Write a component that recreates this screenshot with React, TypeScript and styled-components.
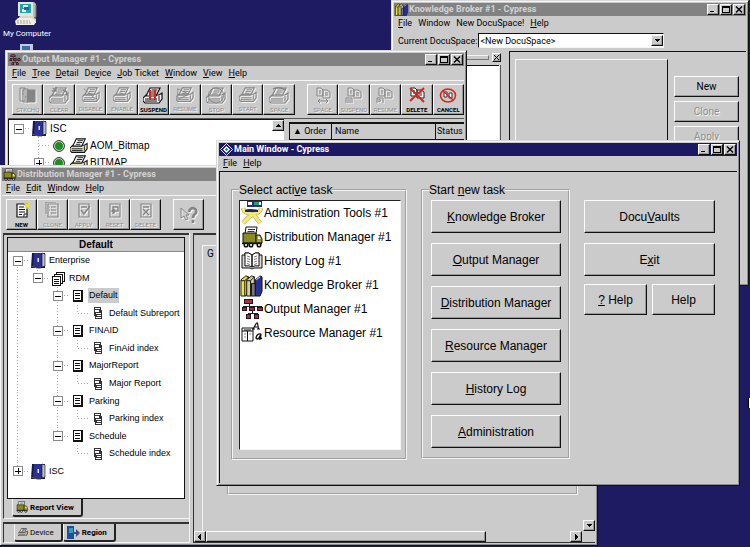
import React from "react";
import styled, { createGlobalStyle, css } from "styled-components";

const GlobalStyle = createGlobalStyle`
  * { box-sizing: border-box; }
  body {
    margin: 0;
    background: #1e1b63;
    font-family: Roboto, "Liberation Sans", Arial, sans-serif;
    font-size: 10px;
    color: #000;
  }
  button, select, input { font: inherit; color: inherit; margin: 0; padding: 0; border-radius: 0; }
  ul { list-style: none; margin: 0; padding: 0; }
  svg { display: block; flex: none; }
`;

const GREY = "#cbcbcb";

const raised = css`
  border: 1px solid;
  border-color: #fbfbfb #111 #111 #fbfbfb;
  box-shadow: inset -1px -1px 0 #999;
`;

/* ---------- desktop ---------- */

const Desktop = styled.main`
  position: relative;
  min-height: 100vh;
  overflow: hidden;
  background: #1e1b63;
`;

const Shortcuts = styled.div`
  display: flex;
  flex-direction: column;
  align-items: center;
  gap: 4px;
  width: 54px;
  padding-top: 1px;
`;

const Shortcut = styled.button`
  display: flex;
  flex-direction: column;
  align-items: center;
  gap: 2px;
  border: 0;
  background: none;
  color: #fff;
  font-size: 8px;
  line-height: 12px;
  white-space: nowrap;
`;

const EdgeMark = styled.div`
  position: absolute;
  right: 0;
  top: 398px;
  width: 2px;
  height: 10px;
  background: #fff;
  border-left: 1px solid #000;
`;

/* ---------- window chrome ---------- */

type Place = { $x: number; $y: number; $w: number; $h: number };

const Frame = styled.section<Place>`
  position: absolute;
  left: ${(p) => p.$x}px;
  top: ${(p) => p.$y}px;
  width: ${(p) => p.$w}px;
  height: ${(p) => p.$h}px;
  display: flex;
  flex-direction: column;
  padding: 2px;
  background: ${GREY};
  border: 1px solid;
  border-color: #d8d8d8 #111 #111 #d8d8d8;
  box-shadow: inset 1px 1px 0 #f6f6f6, inset -1px -1px 0 #8c8c8c;
  overflow: hidden;
`;

const TitleBar = styled.header<{ $active?: boolean }>`
  display: flex;
  align-items: center;
  flex: none;
  gap: 1px;
  height: 13px;
  padding: 0 1px;
  background: ${(p) => (p.$active ? "#1c1864" : "#828282")};
  color: ${(p) => (p.$active ? "#fff" : "#d2d2d2")};
`;

const Title = styled.h2`
  flex: 1;
  margin: 0;
  font-size: 9px;
  font-weight: 700;
  line-height: 13px;
  white-space: nowrap;
`;

const CaptionGroup = styled.div`
  display: flex;
  gap: 1px;
`;

const CaptionButton = styled.button`
  display: grid;
  place-items: center;
  width: 12px;
  height: 11px;
  background: ${GREY};
  ${raised}
`;

const MenuBar = styled.nav`
  display: flex;
  flex: none;
  align-items: center;
  gap: 6px;
  height: 14px;
  padding-left: 4px;
`;

const MenuItem = styled.button`
  border: 0;
  background: none;
  font-size: 9px;
  line-height: 14px;
  white-space: nowrap;
`;

const Key = styled.u`
  text-underline-offset: 1px;
  text-decoration-thickness: 1px;
`;

function Mnemonic({ text }: { text: string }) {
  const i = text.indexOf("&");
  if (i < 0) return <>{text}</>;
  return (
    <span>
      {text.slice(0, i)}
      <Key>{text[i + 1]}</Key>
      {text.slice(i + 2)}
    </span>
  );
}

type WindowProps = Place & {
  title: string;
  icon: React.ReactNode;
  menu: string[];
  active?: boolean;
  children: React.ReactNode;
};

function Window({ title, icon, menu, active, children, ...place }: WindowProps) {
  return (
    <Frame {...place} aria-label={title}>
      <TitleBar $active={active}>
        {icon}
        <Title>{title}</Title>
        <CaptionGroup>
          <CaptionButton aria-label="Minimize">
            <svg width="8" height="7" shapeRendering="crispEdges"><path d="M1 5h4v1H1z" /></svg>
          </CaptionButton>
          <CaptionButton aria-label="Maximize">
            <svg width="8" height="7" shapeRendering="crispEdges"><path d="M0 0h8v7H0zM1 2v4h6V2z" fillRule="evenodd" /></svg>
          </CaptionButton>
          <CaptionButton aria-label="Close">
            <svg width="8" height="7"><path d="M1 0.5l6 6M7 0.5l-6 6" stroke="#000" strokeWidth="1.4" /></svg>
          </CaptionButton>
        </CaptionGroup>
      </TitleBar>
      <MenuBar>
        {menu.map((m) => (
          <MenuItem key={m}><Mnemonic text={m} /></MenuItem>
        ))}
      </MenuBar>
      {children}
    </Frame>
  );
}

/* ---------- icons ---------- */

const ComputerIcon = () => (
  <svg width="24" height="25" viewBox="0 0 24 25">
    <path d="M4 1h15l2 2v13H5z" fill="#b9b9ad" />
    <path d="M3 1h15v14H3z" fill="#e4e4da" />
    <path d="M5 3h11v9H5z" fill="#1ea5a5" />
    <path d="M8 4h5v3H8zM7 8h4v3H7z" fill="#e9f6f2" />
    <path d="M9 6h5v3H9z" fill="#2f5fa8" />
    <path d="M5 15h13l3 3v4H3v-4z" fill="#d6d6c9" />
    <path d="M0 20l3-3h14l4 4-2 3H1z" fill="#efefe4" />
    <path d="M2 20h13M2 22h14" stroke="#a3a398" strokeDasharray="2 1" />
    <path d="M21 4v12l-2 1" stroke="#6d6d66" fill="none" />
  </svg>
);

const NetworkIcon = () => (
  <svg width="16" height="8" viewBox="0 0 16 8" shapeRendering="crispEdges">
    <path d="M1 0h13v8H1z" fill="#c3cbe0" />
    <path d="M3 2h8v6H3z" fill="#3d6ea8" />
  </svg>
);

const TruckIcon = ({ size = 22 }: { size?: number }) => (
  <svg width={size} height={size} viewBox="0 0 22 22">
    <path d="M5 1h11l-1 7H4z" fill="#fff" stroke="#111" />
    <path d="M7 3.500h7M6.500 5.500h7" stroke="#333" />
    <path d="M2 7h13v10H2z" fill="#8b8a1c" stroke="#111" />
    <path d="M15 9h4l2 4v4h-6z" fill="#a5a428" stroke="#111" />
    <path d="M17 10.500h1.500l1 2.500H17z" fill="#fff" />
    <path d="M1 17.500h20" stroke="#111" strokeWidth="1.500" />
    <g fill="#fff" stroke="#111" strokeWidth="1.500">
      <circle cx="5" cy="19" r="1.800" /><circle cx="10" cy="19" r="1.800" /><circle cx="18" cy="19" r="1.800" />
    </g>
  </svg>
);

const ToolsIcon = () => (
  <svg width="22" height="24" viewBox="0 0 22 24">
    <path d="M6 0h15v6H6z" fill="#262b86" />
    <path d="M7 1h4v3H7z" fill="#fff" /><path d="M13 1h5v3h-5z" fill="#2d9b6d" /><path d="M18 1h2v3h-2z" fill="#fff" />
    <path d="M2 7q1 5 6 5l5 2 6 8M20 7q-1 5-6 5l-6 4-6 6" fill="none" stroke="#b5ab48" strokeWidth="4.400" />
    <path d="M2 7q1 5 6 5l5 2 6 8M20 7q-1 5-6 5l-6 4-6 6" fill="none" stroke="#f4e878" strokeWidth="3.200" />
    <path d="M4 9q4-2 13 0v2H4z" fill="#1b2170" />
  </svg>
);

const BookIcon = () => (
  <svg width="22" height="18" viewBox="0 0 22 18">
    <path d="M1 3h3v-2q4-1 7 2 3-3 7-2v2h3v13h-8l-2 1-2-1H1z" fill="#d9d9d9" stroke="#111" />
    <path d="M4 1q4-1 7 2v12q-3-2-7-1zM18 1q-4-1-7 2v12q3-2 7-1z" fill="#fff" stroke="#111" />
    <path d="M6 4l3 1M6 6.500l3 1M6 9l3 1M6 11.500l3 1M16 4l-3 1M16 6.500l-3 1M16 9l-3 1M16 11.500l-3 1" stroke="#777" />
  </svg>
);

const BooksIcon = ({ size = 23 }: { size?: number }) => (
  <svg width={size} height={size} viewBox="0 0 24 24">
    <path d="M1 6l5-4 3 1v15l-3 5H1z" fill="#efe23a" stroke="#111" />
    <path d="M5 7v16M1 7h4l4-4" stroke="#111" fill="none" />
    <path d="M7 6l5-4 3 1v15l-3 5H7z" fill="#d3cf9a" stroke="#111" />
    <path d="M11 7v16M7 7h4l4-4" stroke="#111" fill="none" />
    <path d="M12 10h4v13h-4z" fill="#777" stroke="#111" />
    <path d="M16 6l5-4 2 1v15l-2 5h-5z" fill="#2a2f97" stroke="#111" />
    <path d="M17 6l4-3" stroke="#fff" />
  </svg>
);

const ChartIcon = ({ size = 22 }: { size?: number }) => (
  <svg width={size} height={size} viewBox="0 0 22 22" shapeRendering="crispEdges">
    <path d="M8 5v3M2 9V8h18v2M11 8v7M7 18v-3h9v3" stroke="#222" fill="none" />
    <g fill="#a52f4a" stroke="#2b1117">
      <path d="M3 1h8v4H3zM1 9h4v3H1zM8 9h5v3H8zM16 9h5v3h-5zM5 16h4v4H5zM13 16h4v4h-4z" />
    </g>
  </svg>
);

const ResourceIcon = () => (
  <svg width="22" height="22" viewBox="0 0 22 22">
    <path d="M1 6h11v13H1zM1 9h11M6.500 9v10M3 8h7" fill="#fff" stroke="#111" />
    <path d="M3 12h2M3 15h2M8 12h2" stroke="#888" />
    <path d="M12 7l3.500-6h1l1 6M13.500 5h3.500M11 7h3M16 7h3" fill="none" stroke="#111" strokeWidth="1.200" />
    <path d="M20 12q-4-1-5 4 1 2 3 0l2-4-1 5 2-1" fill="none" stroke="#111" strokeWidth="1.400" />
  </svg>
);

const CypressIcon = () => (
  <svg width="13" height="13" viewBox="0 0 13 13">
    <path d="M6.500 0.500l6 6-6 6-6-6z" fill="#1c1864" stroke="#dfe9ff" />
    <path d="M6.500 3l3.500 3.500-3.500 3.500L3 6.500z" fill="#fff" />
    <path d="M6.500 5v3M5 6.500h3" stroke="#2d7f86" />
  </svg>
);

const VaultIcon = () => (
  <svg width="16" height="17" viewBox="0 0 16 17">
    <path d="M2 1h13v15H1z" fill="#15184a" />
    <path d="M4 1h8v14H3z" fill="#2b3191" />
    <path d="M12 1l3 1v12l-3 1z" fill="#b8bbd8" stroke="#111" strokeWidth="0.600" />
    <path d="M7.500 6h1.500v4H7.500z" fill="#dfe3ff" />
    <path d="M1 14l6 2h4" stroke="#555" fill="none" />
  </svg>
);

const StackIcon = () => (
  <svg width="15" height="15" viewBox="0 0 15 15" shapeRendering="crispEdges">
    <g fill="#fff" stroke="#111"><path d="M5.500 1.500h8v9h-8z" /><path d="M3.500 3.500h8v9h-8z" /><path d="M1.500 5.500h8v9h-8z" /></g>
    <path d="M3 8h5M3 10h5M3 12h5" stroke="#111" />
  </svg>
);

const ReportIcon = () => (
  <svg width="10" height="12" viewBox="0 0 10 12" shapeRendering="crispEdges">
    <path d="M0 0h10v12H0z" fill="#111" /><path d="M1 1h7v9H1z" fill="#fff" />
    <path d="M2 3h5v1H2zM2 5h5v1H2zM2 8h5v1H2z" fill="#111" />
  </svg>
);

const SubreportIcon = () => (
  <svg width="8" height="12" viewBox="0 0 8 12" shapeRendering="crispEdges">
    <path d="M0 0h7v3h1v9H1V9H0z" fill="#333" /><path d="M1 1h5v1H1zM1 3h4v2H1zM2 6h5v1H2zM3 8h4v1H3zM2 10h5v1H2z" fill="#fff" />
  </svg>
);

const StatusDot = () => (
  <svg width="12" height="12" viewBox="0 0 12 12">
    <circle cx="6" cy="6" r="5.400" fill="#d7ead7" stroke="#222" /><circle cx="6" cy="6" r="4" fill="#1d8f22" />
  </svg>
);

const PrinterIcon = ({ width = 20, ink = "#111", paper = "#fff", body = "#e4e4c2", children }: {
  width?: number; ink?: string; paper?: string; body?: string; children?: React.ReactNode;
}) => (
  <svg width={width} height={(width * 17) / 20} viewBox="0 0 20 17">
    <path d="M3 8h13l3-2v6l-3 4H2l-2-2v-3z" fill={body} stroke={ink} strokeWidth="1.200" />
    <path d="M7 1h10l-4 8H3z" fill={paper} stroke={ink} strokeWidth="1.200" />
    <path d="M8.500 3h6M7.500 5h6M6.500 7h5" stroke={ink} />
    <path d="M2 12h12M2 14h12M16 9v5" stroke={ink} />
    {children}
  </svg>
);

const OFF = "#858585";
const off = { ink: OFF, paper: "none", body: "none" };

const StackCheck = () => (
  <svg width="18" height="17" viewBox="0 0 18 17" fill="none" stroke={OFF}>
    <path d="M1 1h5v13H1zM4 2h5v13H4z" /><path d="M8 3h8v12H8z" fill={OFF} /><path d="M3 4h2M3 7h2M6 10h2" />
  </svg>
);
const Pages = ({ ink = OFF, fill = "none", children }: { ink?: string; fill?: string; children?: React.ReactNode }) => (
  <svg width="18" height="17" viewBox="0 0 18 17" fill="none" stroke={ink}>
    <path d="M3 1h4l2 2v6H3zM9 3h4l3 2v6H9z" fill={fill} />
    <path d="M5 4h2M5 6h2M11 6h3M11 8h3" />
    {children}
  </svg>
);
const Sheet = ({ ink = OFF, fill = "none", children }: { ink?: string; fill?: string; children?: React.ReactNode }) => (
  <svg width="18" height="17" viewBox="0 0 18 17" fill="none" stroke={ink}>
    <path d="M4 2h10v13H4z" fill={fill} strokeWidth="1.200" />
    {children}
  </svg>
);

/* ---------- toolbars ---------- */

const Toolbar = styled.div`
  display: flex;
  flex: none;
  gap: 12px;
  padding: 3px 0 3px 4px;
  border-top: 1px solid #f4f4f4;
`;

const ToolGroup = styled.div<{ $count: number; $fixed?: boolean }>`
  display: grid;
  flex: ${(p) => (p.$fixed ? "none" : p.$count)};
  grid-template-columns: repeat(${(p) => p.$count}, ${(p) => (p.$fixed ? "auto" : "minmax(0, 1fr)")});
`;

const ToolButton = styled.button`
  display: flex;
  flex-direction: column;
  align-items: center;
  justify-content: center;
  gap: 3px;
  min-width: 31px;
  height: 31px;
  background: ${GREY};
  font-size: 6px;
  font-weight: 700;
  line-height: 6px;
  ${raised}
  &:disabled {
    color: #8d8d8d;
    font-weight: 400;
    text-shadow: 1px 1px 0 #f4f4f4;
  }
  &:disabled svg { filter: drop-shadow(1px 1px 0 #f4f4f4); }
`;

type Tool = { label: string; icon: React.ReactNode; on?: boolean };

const outputTools: Tool[] = [
  { label: "STKCHQ", icon: <StackCheck /> },
  { label: "CLEAR", icon: <PrinterIcon {...off}><path d="M4 1l3 3M7 0v4H3M14 3q5 1 4 6" stroke={OFF} fill="none" strokeWidth="1.500" /></PrinterIcon> },
  { label: "DISABLE", icon: <PrinterIcon {...off} width={18}><path d="M2 2l14 12" stroke={OFF} /></PrinterIcon> },
  { label: "ENABLE", icon: <PrinterIcon {...off} width={18} /> },
  { label: "SUSPEND", on: true, icon: <PrinterIcon body="#f3f3f3"><path d="M7 3v10M12 3v10" stroke="#d9261c" strokeWidth="2" /></PrinterIcon> },
  { label: "RESUME", icon: <PrinterIcon {...off} width={18}><path d="M2 2l12 6-12 6z" stroke={OFF} fill="none" /></PrinterIcon> },
  { label: "STOP", icon: <PrinterIcon {...off}><circle cx="10" cy="8.500" r="7.500" stroke={OFF} fill="none" /></PrinterIcon> },
  { label: "START", icon: <PrinterIcon {...off} width={18} /> },
  { label: "SPACE", icon: <PrinterIcon {...off}><path d="M4 2q6-3 13 1" stroke={OFF} fill="none" strokeWidth="1.500" /></PrinterIcon> },
];

const jobTools: Tool[] = [
  { label: "SPACE", icon: <Pages><path d="M4 14h10M6 12l-2 2 2 2M12 12l2 2-2 2" /></Pages> },
  { label: "SUSPEND", icon: <Pages><path d="M1 16v-5h6v5M3 12v4M5 12v4" /></Pages> },
  { label: "RESUME", icon: <Pages><path d="M1 16v-5h6v5M3 12v3l2-1.500z" /></Pages> },
  { label: "DELETE", on: true, icon: <Pages ink="#222" fill="#fff"><path d="M2 1l14 14M16 1L2 14" stroke="#d9261c" strokeWidth="2" /></Pages> },
  { label: "CANCEL", on: true, icon: (
    <svg width="18" height="17" viewBox="0 0 18 17" fill="none">
      <path d="M5 5h3v5H5zM10 6h3v5h-3z" stroke="#333" fill="#fff" />
      <ellipse cx="9" cy="8.500" rx="7.500" ry="6.500" stroke="#d9261c" strokeWidth="1.600" /><path d="M4 4l10 9" stroke="#d9261c" strokeWidth="1.200" />
    </svg>
  ) },
];

const reportTools: Tool[] = [
  { label: "NEW", on: true, icon: (
    <Sheet ink="#111" fill="#fff">
      <path d="M6 5h5M6 7.500h6M6 10h6M6 12.500h3" />
      <path d="M11 15v-3h3" fill="#fff" />
      <path d="M14 0v7M10.500 3.500h7M11.500 1l5 5M16.500 1l-5 5" stroke="#efe12c" strokeWidth="1.200" />
    </Sheet>
  ) },
  { label: "CLONE", icon: <Sheet><path d="M2 12V0h10M7 5h5M7 8h5M7 11h5M5 5h1M5 8h1" /></Sheet> },
  { label: "APPLY", icon: <Sheet><path d="M6 5h6M6 8l3 4 6-8" strokeWidth="1.500" /></Sheet> },
  { label: "RESET", icon: <Sheet><path d="M7 12V5h5v4H7M9 11l-3-2 3-2" strokeWidth="1.400" /></Sheet> },
  { label: "DELETE", icon: <Sheet><path d="M6 5h6M6 7l6 6M12 7l-6 6" strokeWidth="1.400" /></Sheet> },
];

function Tools({ items, fixed }: { items: Tool[]; fixed?: boolean }) {
  return (
    <ToolGroup $count={items.length} $fixed={fixed}>
      {items.map((t) => (
        <ToolButton key={t.label} disabled={!t.on}>
          {t.icon}
          {t.label}
        </ToolButton>
      ))}
    </ToolGroup>
  );
}

/* ---------- tree ---------- */

const dash = "repeating-linear-gradient(#aaa 0 1px, transparent 1px 3px)";
const dashAcross = "repeating-linear-gradient(90deg, #aaa 0 1px, transparent 1px 3px)";

const TreeList = styled.ul`
  display: grid;
  grid-auto-rows: 17px;
  align-content: start;
  font-family: "Liberation Sans", Arial, sans-serif;
`;

const EvenTree = styled(TreeList)`
  grid-auto-rows: 1fr;
  height: 228px;
  font-size: 9px;
`;

const TreeRow = styled.li`
  display: flex;
  align-items: center;
  min-width: 0;
`;

const Guide = styled.span<{ $up?: boolean; $down?: boolean; $across?: boolean }>`
  display: grid;
  place-items: center;
  flex: none;
  align-self: stretch;
  width: 20px;
  background:
    ${(p) => (p.$up ? dash : "none")} 9px 0 / 1px 50% no-repeat,
    ${(p) => (p.$down ? dash : "none")} 9px 100% / 1px 50% no-repeat,
    ${(p) => (p.$across ? dashAcross : "none")} 100% 50% / 10px 1px no-repeat;
`;

const Expander = styled.button`
  display: grid;
  place-items: center;
  width: 10px;
  height: 10px;
  background: #fff;
  border: 1px solid #8a8a8a;
`;

const TreeIcon = styled.span`
  display: grid;
  place-items: center;
  flex: none;
  width: 20px;
`;

const TreeLabel = styled.span<{ $selected?: boolean }>`
  padding: 0 1px;
  line-height: 15px;
  white-space: nowrap;
  background: ${(p) => (p.$selected ? "#cbcbcb" : "transparent")};
`;

type Node = {
  label: string;
  guides?: string;
  state?: "open" | "closed";
  up?: boolean;
  down?: boolean;
  selected?: boolean;
  icons: React.ReactNode[];
};

function Row({ node }: { node: Node }) {
  return (
    <TreeRow>
      {(node.guides ?? "").split("").map((g, i) => (
        <Guide key={i} $up={g === "|"} $down={g === "|"} />
      ))}
      <Guide $up={node.up} $down={node.down} $across>
        {node.state && (
          <Expander aria-label={`${node.state === "open" ? "Collapse" : "Expand"} ${node.label}`}>
            <svg width="6" height="6" shapeRendering="crispEdges">
              <path d={node.state === "open" ? "M0 3h6v1H0z" : "M0 3h6v1H0zM3 0h1v6H3z"} />
            </svg>
          </Expander>
        )}
      </Guide>
      {node.icons.map((icon, i) => <TreeIcon key={i}>{icon}</TreeIcon>)}
      <TreeLabel $selected={node.selected}>{node.label}</TreeLabel>
    </TreeRow>
  );
}

const outputNodes: Node[] = [
  { label: "ISC", state: "open", icons: [<VaultIcon />] },
  { label: "AOM_Bitmap", guides: ".", up: true, down: true, icons: [<StatusDot />, <PrinterIcon width={18} />] },
  { label: "BITMAP", guides: ".", state: "closed", up: true, down: true, icons: [<StatusDot />, <PrinterIcon width={18} />] },
];

const reports: [string, string][] = [
  ["Default", "Default Subreport"],
  ["FINAID", "FinAid index"],
  ["MajorReport", "Major Report"],
  ["Parking", "Parking index"],
  ["Schedule", "Schedule index"],
];

const reportNodes: Node[] = [
  { label: "Enterprise", state: "open", down: true, icons: [<VaultIcon />] },
  { label: "RDM", guides: "|", state: "open", up: true, icons: [<StackIcon />] },
  ...reports.flatMap(([name, sub], i): Node[] => {
    const last = i === reports.length - 1;
    return [
      { label: name, guides: "|.", state: "open", up: true, down: !last, selected: i === 0, icons: [<ReportIcon />] },
      { label: sub, guides: last ? "|.." : "|.|", up: true, icons: [<SubreportIcon />] },
    ];
  }),
  { label: "ISC", state: "closed", up: true, icons: [<VaultIcon />] },
];

/* ---------- scroll bars ---------- */

const ScrollButton = styled.button`
  display: grid;
  place-items: center;
  flex: none;
  width: 12px;
  height: 11px;
  background: ${GREY};
  ${raised}
`;

const arrows = {
  up: "M3 1h1v1h1v1h1v1H1V3h1V2h1z",
  down: "M1 1h5v1H5v1H4v1H3V3H2V2H1z",
  left: "M4 0v6H3V5H2V4H1V2h1V1h1V0z",
  right: "M2 0v6h1V5h1V4h1V2H4V1H3V0z",
};

function Scroll({ to }: { to: keyof typeof arrows }) {
  return (
    <ScrollButton aria-label={`Scroll ${to}`}>
      <svg width="7" height="6" shapeRendering="crispEdges"><path d={arrows[to]} /></svg>
    </ScrollButton>
  );
}

/* ---------- Knowledge Broker ---------- */

const SpaceRow = styled.div`
  display: flex;
  flex: none;
  align-items: center;
  gap: 1px;
  height: 21px;
  padding-left: 4px;
  font-size: 9px;
`;

const SelectBox = styled.span`
  display: flex;
  align-items: center;
  width: 186px;
  height: 15px;
  background: #fff;
  border: 1px solid;
  border-color: #111 #f4f4f4 #f4f4f4 #111;
`;

const Select = styled.select`
  flex: 1;
  min-width: 0;
  appearance: none;
  border: 0;
  padding-left: 1px;
  background: none;
  font-size: 9px;
  line-height: 12px;
`;

const BrokerBody = styled.div`
  display: grid;
  grid-template-columns: 115px 1fr;
  flex: 1;
  min-height: 0;
`;

const Dock = styled.div`
  display: flex;
  flex-direction: column;
  gap: 3px;
  padding: 2px 8px 2px 0;
`;

const DockBar = styled.div`
  display: flex;
  align-items: center;
  gap: 3px;
`;

const Grip = styled.span`
  flex: 1;
  height: 5px;
  border: 1px solid;
  border-color: #f4f4f4 #777 #777;
`;

const DockClose = styled.button`
  display: grid;
  place-items: center;
  width: 9px;
  height: 9px;
  background: ${GREY};
  ${raised}
`;

const DockContent = styled.div`
  flex: 1;
  margin-right: 2px;
  background: #fff;
  border: solid #111;
  border-width: 1px 0 0 1px;
  box-shadow: 1px 0 0 #e8e8e8, 2px 0 0 #555;
`;

const BrokerPane = styled.div`
  display: flex;
  gap: 6px;
  padding: 7px 7px 4px 5px;
  border: solid #111;
  border-width: 1px 0 0 1px;
`;

const Sheet3D = styled.div`
  flex: 1;
  border: 1px solid;
  border-color: #f8f8f8 #111 #111 #f8f8f8;
`;

const SideButtons = styled.div`
  display: flex;
  flex-direction: column;
  gap: 4px;
  width: 65px;
  padding-top: 17px;
`;

const SideButton = styled.button`
  height: 21px;
  background: ${GREY};
  font-size: 10px;
  ${raised}
  &:disabled { color: #8d8d8d; text-shadow: 1px 1px 0 #f4f4f4; }
`;

function KnowledgeBroker() {
  return (
    <Window $x={391} $y={0} $w={358} $h={286} title="Knowledge Broker #1 - Cypress" icon={<BooksIcon size={13} />}
      menu={["&File", "Window", "New DocuSpace!", "&Help"]}>
      <SpaceRow>
        <label htmlFor="space">Current DocuSpace:</label>
        <SelectBox>
          <Select id="space"><option>&lt;New DocuSpace&gt;</option></Select>
          <Scroll to="down" />
        </SelectBox>
      </SpaceRow>
      <BrokerBody>
        <Dock>
          <DockBar>
            <Grip />
            <DockClose aria-label="Close pane">
              <svg width="5" height="5"><path d="M0 0l5 5M5 0L0 5" stroke="#000" /></svg>
            </DockClose>
          </DockBar>
          <DockContent />
        </Dock>
        <BrokerPane>
          <Sheet3D />
          <SideButtons>
            <SideButton>New</SideButton>
            <SideButton disabled>Clone</SideButton>
            <SideButton disabled>Apply</SideButton>
          </SideButtons>
        </BrokerPane>
      </BrokerBody>
    </Window>
  );
}

/* ---------- Output Manager ---------- */

const OutputBody = styled.div`
  display: flex;
  flex: 1;
  gap: 5px;
  min-height: 0;
  border-top: 1px solid #555;
`;

const OutputTree = styled.div`
  display: flex;
  flex: 0 0 276px;
  background: #fff;
  border: solid #111;
  border-width: 1px 0 0 1px;
`;

const Grow = styled.div`
  flex: 1;
  min-width: 0;
`;

const JobPane = styled.div`
  flex: 1;
  padding-top: 3px;
`;

const JobTable = styled.table`
  width: 100%;
  table-layout: fixed;
  border-collapse: collapse;
  border-top: 2px solid #111;
  th {
    height: 16px;
    padding: 0 3px;
    border: solid #111;
    border-width: 0 1px 1px;
    font-size: 9px;
    font-weight: 400;
    line-height: 13px;
    text-align: left;
    white-space: nowrap;
  }
  th:last-child { padding: 0 0 0 1px; border-right: 0; }
`;

const Col = styled.col<{ $w?: number }>`
  width: ${(p) => (p.$w ? `${p.$w}px` : "auto")};
`;

function OutputManager() {
  return (
    <Window $x={5} $y={50} $w={462} $h={140} title="Output Manager #1 - Cypress" icon={<ChartIcon size={12} />}
      menu={["&File", "&Tree", "&Detail", "De&vice", "&Job Ticket", "&Window", "&View", "&Help"]}>
      <Toolbar>
        <Tools items={outputTools} />
        <Tools items={jobTools} />
      </Toolbar>
      <OutputBody>
        <OutputTree>
          <Grow>
            <TreeList>
              {outputNodes.map((n) => <Row key={n.label} node={n} />)}
            </TreeList>
          </Grow>
          <Scroll to="up" />
        </OutputTree>
        <JobPane>
          <JobTable>
            <colgroup><Col $w={42} /><Col $w={104} /><Col /></colgroup>
            <thead><tr><th>▲ Order</th><th>Name</th><th>Status</th></tr></thead>
          </JobTable>
        </JobPane>
      </OutputBody>
    </Window>
  );
}

/* ---------- Distribution Manager ---------- */

const DistBody = styled.div`
  display: flex;
  flex: 1;
  gap: 3px;
  min-height: 0;
`;

const DistLeft = styled.div`
  display: flex;
  flex: 0 0 188px;
  flex-direction: column;
  gap: 3px;
  border-right: 1px solid #f4f4f4;
`;

const Pane = styled.div<{ $grow?: boolean }>`
  display: flex;
  flex-direction: column;
  flex: ${(p) => (p.$grow ? 1 : "none")};
  margin-left: 1px;
  padding: ${(p) => (p.$grow ? "2px 4px 1px 3px" : "0 4px 0 5px")};
  border: solid;
  border-width: 2px 0 1px 1px;
  border-color: #333 #333 #f4f4f4;
`;

const TreeBox = styled.div`
  flex: 1;
  background: #fff;
  border: 1px solid #111;
`;

const TreeHeading = styled.h3`
  margin: 0;
  background: ${GREY};
  border-bottom: 1px solid #888;
  font-family: "Liberation Sans", Arial, sans-serif;
  font-size: 10px;
  font-weight: 700;
  line-height: 13px;
  text-align: center;
`;

const Tabs = styled.div`
  display: flex;
  padding-left: 5px;
`;

const Tab = styled.button<{ $current?: boolean }>`
  display: flex;
  align-items: center;
  gap: 2px;
  height: 18px;
  padding: 0 7px 0 3px;
  background: ${GREY};
  border: solid;
  border-width: 0 2px 2px 1px;
  border-color: #111 #222 #222 #f4f4f4;
  border-radius: 0 0 3px 3px;
  font-size: 8px;
  font-weight: ${(p) => (p.$current ? 700 : 400)};
`;

const DistRight = styled.div`
  display: flex;
  flex: 1;
  flex-direction: column;
  min-width: 0;
  border: solid #333;
  border-width: 2px 0 1px 1px;
`;

const DistScroller = styled.div`
  display: flex;
  flex: 1;
  align-items: flex-end;
  padding-left: 8px;
`;

const DetailPage = styled.div`
  display: flex;
  flex: 1;
  flex-direction: column;
  align-self: stretch;
  margin-top: 10px;
  padding: 2px 5px 36px 4px;
  border: solid #f4f4f4;
  border-width: 1px 0 0 1px;
`;

const EtchedBox = styled.div`
  flex: 1;
  margin-left: 20px;
  border: 2px groove #f4f4f4;
  border-top: 0;
`;

const HScroll = styled.div`
  display: flex;
  flex: none;
  padding-right: 13px;
`;

const Track = styled.div`
  flex: 1;
`;

const Thumb = styled.div`
  width: 77%;
  height: 11px;
  background: ${GREY};
  ${raised}
`;

const DeviceGlyph = () => <PrinterIcon width={10} />;
const RegionGlyph = () => (
  <svg width="13" height="13" viewBox="0 0 13 13">
    <path d="M0 0h7v13H0z" fill="#1c4f9c" /><path d="M2 2h4v5H2z" fill="#2fa0b8" />
    <path d="M6 6h3V3l4 4-4 4V8H6z" fill="#444c7c" />
  </svg>
);

function DistributionManager() {
  return (
    <Window $x={-1} $y={165} $w={599} $h={381} title="Distribution Manager #1 - Cypress" icon={<TruckIcon size={13} />}
      menu={["&File", "&Edit", "&Window", "&Help"]}>
      <Toolbar>
        <Tools items={reportTools} fixed />
        <ToolGroup $count={1} $fixed>
          <ToolButton disabled aria-label="Context help">
            <svg width="18" height="20" viewBox="0 0 18 20" fill="none" stroke={OFF}>
              <path d="M1 3v10l3-2 2 4 2-1-2-4h3z" />
              <path d="M9 7q1-4 4-4 4 1 3 5-3 2-3 5M13 15v3" strokeWidth="2.600" />
            </svg>
          </ToolButton>
        </ToolGroup>
      </Toolbar>
      <DistBody>
        <DistLeft>
          <Pane $grow>
            <TreeBox>
              <TreeHeading>Default</TreeHeading>
              <EvenTree>
                {reportNodes.map((n) => <Row key={n.label + (n.state ?? "")} node={n} />)}
              </EvenTree>
            </TreeBox>
            <Tabs>
              <Tab $current><TruckIcon size={12} />Report View</Tab>
            </Tabs>
          </Pane>
          <Pane>
            <Tabs>
              <Tab><DeviceGlyph />Device</Tab>
              <Tab $current><RegionGlyph />Region</Tab>
            </Tabs>
          </Pane>
        </DistLeft>
        <DistRight>
          <DistScroller>
            <DetailPage>
              G
              <EtchedBox />
            </DetailPage>
            <Scroll to="down" />
          </DistScroller>
          <HScroll>
            <Scroll to="left" />
            <Track><Thumb /></Track>
            <Scroll to="right" />
          </HScroll>
        </DistRight>
      </DistBody>
    </Window>
  );
}

/* ---------- Main Window ---------- */

const MainBody = styled.div`
  display: flex;
  flex: 1;
  align-items: flex-start;
  gap: 14px;
  margin-top: 1px;
  padding: 11px;
  border: solid #111;
  border-width: 1px 0 0 1px;
  font-family: "Liberation Sans", Arial, sans-serif;
  font-size: 12px;
`;

const Group = styled.fieldset<{ $w: number }>`
  width: ${(p) => p.$w}px;
  min-width: 0;
  margin: 0;
  padding: 3px 4px 8px 6px;
  border: 2px groove #f4f4f4;
`;

const Legend = styled.legend`
  padding: 0;
  font-size: 12px;
  line-height: 14px;
`;

const TaskList = styled.ul`
  height: 250px;
  background: #fff;
  border: 1px solid;
  border-color: #222 #f4f4f4 #f4f4f4 #222;
`;

const Task = styled.li`
  display: flex;
  align-items: center;
  gap: 1px;
  height: 24px;
  white-space: nowrap;
`;

const TaskIcon = styled.span`
  display: grid;
  place-items: center;
  width: 23px;
`;

const Stack = styled.div`
  display: flex;
  flex-direction: column;
  gap: 10px;
  padding: 0 3px 1px 2px;
`;

const Actions = styled(Stack)`
  width: 131px;
  padding: 17px 0 0;
`;

const Push = styled.button<{ $short?: boolean }>`
  flex: 1;
  min-height: ${(p) => (p.$short ? 31 : 33)}px;
  background: ${GREY};
  font-size: 12px;
  ${raised}
`;

const Pair = styled.div`
  display: flex;
  gap: 5px;
  margin-top: -2px;
`;

const tasks: [string, React.ReactNode][] = [
  ["Administration Tools #1", <ToolsIcon />],
  ["Distribution Manager #1", <TruckIcon />],
  ["History Log #1", <BookIcon />],
  ["Knowledge Broker #1", <BooksIcon />],
  ["Output Manager #1", <ChartIcon />],
  ["Resource Manager #1", <ResourceIcon />],
];

const starters = ["&Knowledge Broker", "&Output Manager", "&Distribution Manager", "&Resource Manager", "&History Log", "&Administration"];

function MainWindow() {
  return (
    <Window $x={216} $y={140} $w={524} $h={346} active title="Main Window - Cypress" icon={<CypressIcon />} menu={["&File", "&Help"]}>
      <MainBody>
        <Group $w={176}>
          <Legend><Mnemonic text="Select acti&ve task" /></Legend>
          <TaskList>
            {tasks.map(([name, icon]) => (
              <Task key={name}><TaskIcon>{icon}</TaskIcon>{name}</Task>
            ))}
          </TaskList>
        </Group>
        <Group $w={149}>
          <Legend><Mnemonic text="Start &new task" /></Legend>
          <Stack>
            {starters.map((s) => <Push key={s}><Mnemonic text={s} /></Push>)}
          </Stack>
        </Group>
        <Actions>
          <Push><Mnemonic text="Docu&Vaults" /></Push>
          <Push><Mnemonic text="E&xit" /></Push>
          <Pair>
            <Push $short><Mnemonic text="&? Help" /></Push>
            <Push $short>Help</Push>
          </Pair>
        </Actions>
      </MainBody>
    </Window>
  );
}

export default function App() {
  return (
    <>
      <GlobalStyle />
      <Desktop>
        <Shortcuts>
          <Shortcut><ComputerIcon />My Computer</Shortcut>
          <Shortcut aria-label="Network"><NetworkIcon /></Shortcut>
        </Shortcuts>
        <EdgeMark />
        <KnowledgeBroker />
        <OutputManager />
        <DistributionManager />
        <MainWindow />
      </Desktop>
    </>
  );
}
